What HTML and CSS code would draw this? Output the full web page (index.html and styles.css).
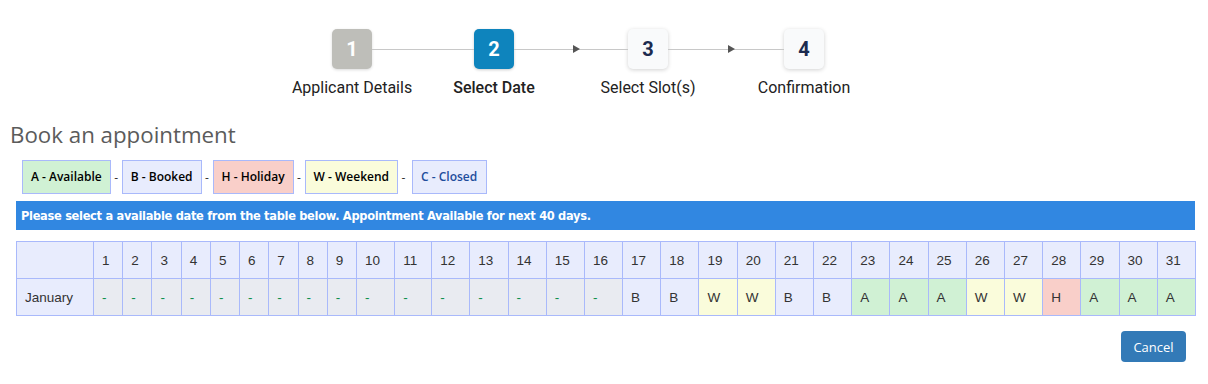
FILE: index.html
```html
<html>

<head>
    <meta name="viewport" content="width=device-width, initial-scale=1">
    <title>Book an appointment</title>
    <link rel="stylesheet" href="styles.css">
</head>

<body>
    <div class="stepper">
        <div class="step-box done">1</div>
        <div class="connector"></div>
        <div class="step-box active">2</div>
        <div class="connector arrow"></div>
        <div class="step-box">3</div>
        <div class="connector arrow"></div>
        <div class="step-box">4</div>

        <div class="step-label">Applicant Details</div>
        <div></div>
        <div class="step-label current">Select Date</div>
        <div></div>
        <div class="step-label">Select Slot(s)</div>
        <div></div>
        <div class="step-label">Confirmation</div>
    </div>

    <h1 class="title">Book an appointment</h1>

    <div class="legend">
        <span class="key available">A - Available</span>
        <span class="sep">-</span>
        <span class="key booked">B - Booked</span>
        <span class="sep">-</span>
        <span class="key holiday">H - Holiday</span>
        <span class="sep">-</span>
        <span class="key weekend">W - Weekend</span>
        <span class="sep">-</span>
        <span class="key closed">C - Closed</span>
    </div>

    <div class="notice">Please select a available date from the table below. Appointment Available for next 40 days.</div>

    <table class="calendar">
        <thead>
            <tr>
                <th class="month"></th>
                <th>1</th><th>2</th><th>3</th><th>4</th><th>5</th><th>6</th><th>7</th><th>8</th>
                <th>9</th><th>10</th><th>11</th><th>12</th><th>13</th><th>14</th><th>15</th><th>16</th>
                <th>17</th><th>18</th><th>19</th><th>20</th><th>21</th><th>22</th><th>23</th><th>24</th>
                <th>25</th><th>26</th><th>27</th><th>28</th><th>29</th><th>30</th><th>31</th>
            </tr>
        </thead>
        <tbody>
            <tr>
                <td class="month">January</td>
                <td class="past">-</td><td class="past">-</td><td class="past">-</td><td class="past">-</td>
                <td class="past">-</td><td class="past">-</td><td class="past">-</td><td class="past">-</td>
                <td class="past">-</td><td class="past">-</td><td class="past">-</td><td class="past">-</td>
                <td class="past">-</td><td class="past">-</td><td class="past">-</td><td class="past">-</td>
                <td class="b">B</td><td class="b">B</td><td class="w">W</td><td class="w">W</td>
                <td class="b">B</td><td class="b">B</td><td class="a">A</td><td class="a">A</td>
                <td class="a">A</td><td class="w">W</td><td class="w">W</td><td class="h">H</td>
                <td class="a">A</td><td class="a">A</td><td class="a">A</td>
            </tr>
        </tbody>
    </table>

    <div class="actions">
        <button class="cancel">Cancel</button>
    </div>
</body>

</html>
```

FILE: styles.css
```css
body {
    margin: 0;
    font-family: Roboto, "Liberation Sans", sans-serif;
    background: white;
    color: #333;
}

/* steps */
.stepper {
    display: grid;
    grid-template-columns: 40px 102px 40px 114px 40px 116px 40px;
    grid-template-rows: 40px auto;
    row-gap: 9px;
    margin: 29px 0 0 332px;
    width: 492px;
}

.step-box {
    display: flex;
    align-items: center;
    justify-content: center;
    border-radius: 5px;
    background: #f9fafb;
    color: #1c2b4f;
    font-weight: bold;
    font-size: 20px;
    box-shadow: 0 1px 4px rgba(0, 0, 0, 0.18);
}

.step-box.done {
    background: #bebeb9;
    color: white;
    box-shadow: 0 1px 3px rgba(0, 0, 0, 0.15);
}

.step-box.active {
    background: #0e84bd;
    color: white;
    box-shadow: 0 1px 3px rgba(0, 0, 0, 0.2);
}

.connector {
    align-self: center;
    height: 1px;
    background: #c8c8c8;
    position: relative;
}

.connector.arrow::after {
    content: "";
    position: absolute;
    left: 50%;
    top: -4px;
    margin-left: 2px;
    border-left: 7px solid #555;
    border-top: 4.5px solid transparent;
    border-bottom: 4.5px solid transparent;
}

.step-label {
    display: flex;
    justify-content: center;
    white-space: nowrap;
    font-size: 16px;
    color: #222;
}

.step-label.current {
    font-weight: 500;
}

/* heading + legend */
.title {
    margin: 22px 0 0 10px;
    font-family: "Open Sans", sans-serif;
    font-weight: normal;
    font-size: 22.3px;
    color: #5b5b5b;
}

.legend {
    display: flex;
    align-items: center;
    margin: 10px 0 0 22px;
    font-family: "Open Sans", sans-serif;
    font-size: 12px;
    font-weight: 600;
}

.key {
    border: 1px solid #a9b9fb;
    height: 32px;
    line-height: 32px;
    padding: 0 8px;
    color: #000;
}

.sep {
    width: 11px;
    text-align: center;
    font-weight: normal;
}

.available { background: #d0f1d4; }
.booked { background: #e8ecfd; }
.holiday { background: #f9cfc9; }
.weekend { background: #fafcdb; }
.closed { background: #e8ecfd; color: #1e4d9c; padding: 0 9px 0 8px; margin-left: 3px; }

.notice {
    margin: 7px 13px 0 16px;
    background: #3187e1;
    color: white;
    font-family: "DejaVu Sans Condensed", sans-serif;
    font-weight: bold;
    font-size: 12.7px;
    letter-spacing: -0.3px;
    height: 29px;
    line-height: 29px;
    padding-left: 5px;
}

/* calendar */
.calendar {
    border-collapse: collapse;
    margin: 11px 12px 0 16px;
    width: calc(100% - 28px);
    font-family: Arial, "Liberation Sans", sans-serif;
    font-size: 13.5px;
    color: #333;
}

.calendar th,
.calendar td {
    border: 1px solid #a9b9fb;
    height: 37px;
    padding: 0 8px;
    text-align: left;
    font-weight: normal;
}

.calendar th {
    background: #e8ecfd;
}

.calendar .month {
    background: #e8ecfd;
    width: 60px;
}

.calendar td.past { background: #e9ebf1; color: #0b8f4c; }
.calendar td.a { background: #d0f1d4; }
.calendar td.b { background: #e8ecfd; }
.calendar td.w { background: #fafcdb; }
.calendar td.h { background: #f9cfc9; }

.actions {
    display: flex;
    justify-content: flex-end;
    margin: 15px 22px 0 0;
}

.cancel {
    background: #337ab7;
    color: white;
    border: none;
    border-radius: 4px;
    width: 65px;
    height: 31px;
    font-family: "Open Sans", sans-serif;
    font-size: 13px;
}
```
